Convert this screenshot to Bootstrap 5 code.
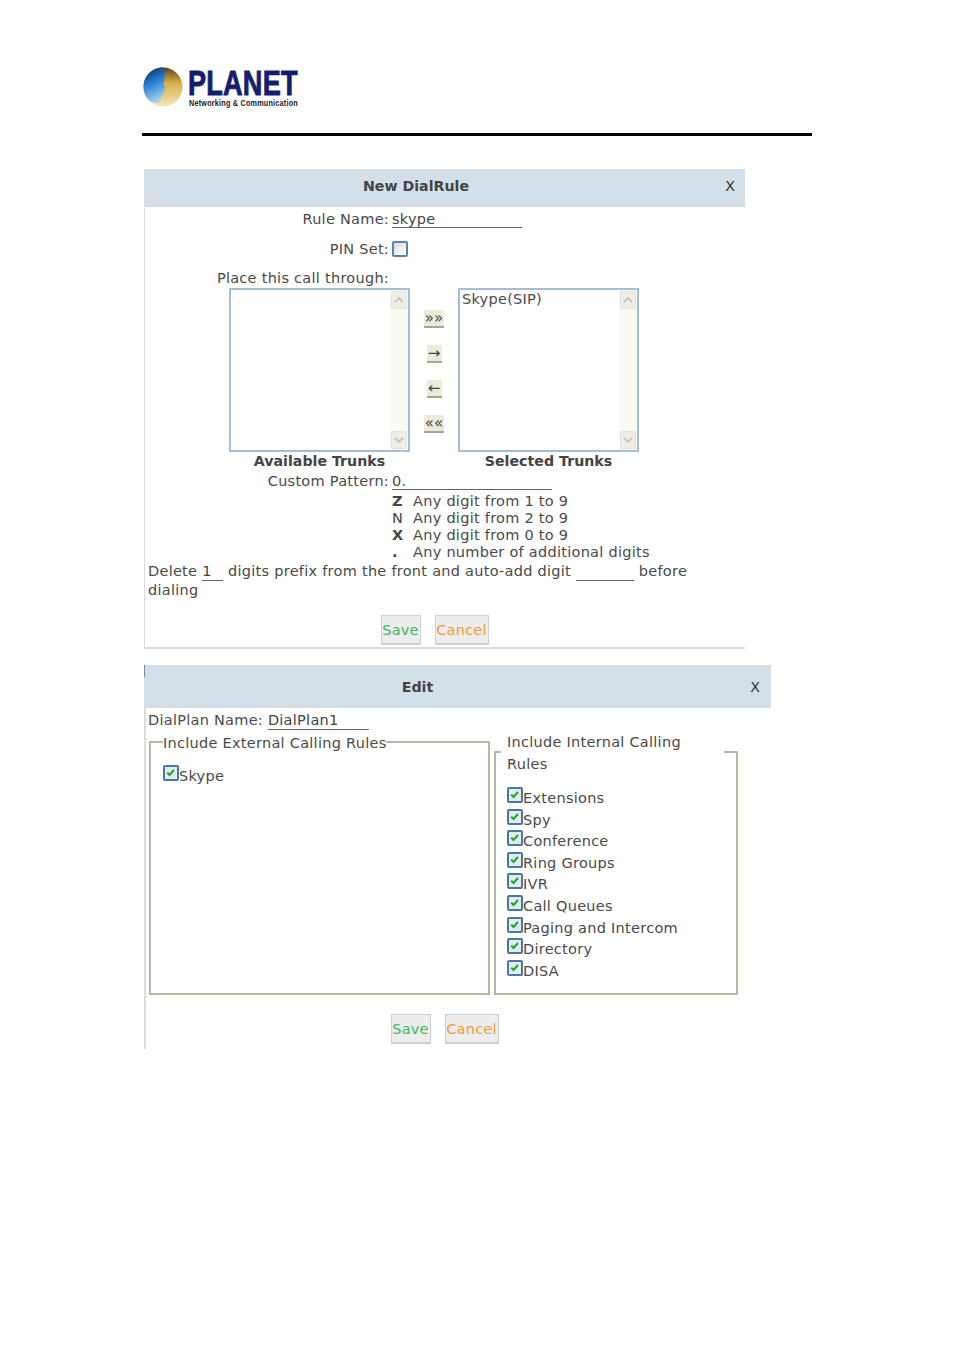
<!DOCTYPE html>
<html lang="en">
<head>
<meta charset="utf-8">
<title>DialRule</title>
<link href="https://cdn.jsdelivr.net/npm/bootstrap@5.3.0/dist/css/bootstrap.min.css" rel="stylesheet">
<style>
html,body{background:#fff}
body{font-family:"DejaVu Sans",sans-serif;font-size:14.5px;letter-spacing:.27px;color:#4a4a4a;line-height:18px;width:954px;height:1350px;overflow:hidden}
.sheet{padding:62px 142px 0 142px}
.brand{height:47px;display:block}
.rule-line{height:3px;background:#000;margin-top:24px;width:670px}
.dlg-a{width:601px;margin:33px 0 0 2px;border-left:1px solid #dcdcdc;border-bottom:2px solid #dcdcdc;height:480px}
.dlg-b{width:627px;margin:16px 0 0 2px;border-left:2px solid #dcdcdc;height:384px;position:relative}
.dlg-b::before{content:"";position:absolute;left:-2px;top:0;width:1px;height:12px;background:#6d8db0}
.head{background:#d3dfe9;border-bottom:1px solid #d8d8d8;color:#444;font-weight:700;font-size:14.2px;letter-spacing:0;position:relative;text-align:center}
.dlg-a .head{height:38px;line-height:34px;padding-right:58px}
.dlg-b .head{height:43px;line-height:44px;padding-right:82px}
.closer{position:absolute;top:0;font-weight:400;color:#333}
.dlg-a .closer{right:10px}.dlg-b .closer{right:11px}
.lbl{width:247px;text-align:right;padding-right:3px;flex:none}
.fld{height:18px;border:0;border-bottom:1px solid #666;padding:0;background:transparent;color:#444;font:inherit;letter-spacing:inherit;outline:0;border-radius:0;display:inline-block}
.line-1{height:23px;padding-top:3px}
.line-2{height:30px;padding-top:8px;align-items:center}
.pin{width:16px;height:16px;margin:0;appearance:none;border:2px solid #5b84ad;background:linear-gradient(135deg,#dcdcd6,#fff);border-radius:2px;display:block}
.line-3{height:28px;padding-top:9px}
.listrow{height:164px;padding-left:84px}
.lbox{width:181px;height:164px;border:2px solid #a5bdd6;background:#fff;position:relative;padding:1px 2px 0;line-height:16px;flex:none}
.sbar{position:absolute;right:0;top:0;bottom:0;width:18px;background:#fafaf4;display:flex;flex-direction:column;justify-content:space-between;padding:1px}
.sbtn{width:16px;height:18px;background:#eeeee6;border:1px solid #e4e4dc;border-radius:2px;display:flex;align-items:center;justify-content:center}
.movers{width:48px;flex:none;padding-top:22px;gap:17px}
.mov{height:18px;background:#ecead9;border:0;border-bottom:2px solid #a4a498;padding:0;font:15px/15px "DejaVu Sans",sans-serif;letter-spacing:0;color:#444;display:block;margin:0 auto;text-align:center;white-space:nowrap;overflow:hidden}
.mov-w{width:20px}.mov-n{width:15px}
.caps{height:18px;font-weight:700;font-size:14.2px;letter-spacing:0;color:#444;padding-left:84px}
.caps span{width:181px;text-align:center;display:block;flex:none}
.caps .gap{width:48px}
.line-c{height:22px;padding-top:2px}
.legend-row{margin-left:247px;height:17px;line-height:17px}
.first-key{margin-top:1px}
.legend-row b{width:21px;font-weight:700;flex:none;color:#444}
.legend-row b.thin{font-weight:400}
.para{padding:1px 40px 0 3px;height:44px}
.savebar{gap:14px;margin-top:10px;justify-content:center}
.dlg-a .savebar{padding-right:21px}
.act{height:30px;background:#ededed;border:1px solid #d0d0d0;border-bottom-width:2px;padding:0;font:14.5px/26px "DejaVu Sans",sans-serif;letter-spacing:.25px;border-radius:0;white-space:nowrap}
.act-s{color:#3cb85a;width:40px}.act-c{color:#f59a38;width:54px}
.dp{height:24px;padding:3px 0 0 2px}
.dp .fld{width:101px;margin-left:0}
.sets{padding-left:3px;gap:4px;height:263px;align-items:flex-start}
fieldset.box{border:2px solid #b8b7a6;margin:0;position:relative}
fieldset.box legend{float:none;width:auto;font-size:inherit;line-height:18px;margin:0;color:#4a4a4a}
.box-l{width:341px;height:263px;padding:0 12px}
fieldset.box-l legend{padding:2px 0 0}
fieldset.box.box-r{width:244px;height:267px;padding:0 11px;margin-top:-4px}
fieldset.box.box-r legend{padding:4px 30px 0 6px;line-height:21.5px;margin-left:-6px;width:223px}
.box-l .opts{margin-top:14px}.box-r .opts{margin-top:13px}
.opt{height:21.6px;display:flex;margin:0;line-height:21px}
.tick{appearance:none;width:16px;height:16px;margin:-1px 0 0;flex:none;border:2px solid #4a78a6;border-radius:2px;background:#e4ecea url("data:image/svg+xml,%3Csvg xmlns='http://www.w3.org/2000/svg' viewBox='0 0 16 16'%3E%3Cpath d='M3 7.500l3 3 6-6.500' fill='none' stroke='%2318a832' stroke-width='2.800'/%3E%3C/svg%3E") center/100% no-repeat;display:block}
.dlg-b .savebar{margin-top:19px;padding-right:28px}
</style>
</head>
<body>
<div class="sheet">
  <svg class="brand" width="170" height="47" viewBox="0 -4 170 47" role="img" aria-label="PLANET">
    <defs>
      <linearGradient id="blu" x1="0.2" y1="0" x2="0.5" y2="1"><stop offset="0" stop-color="#0e2a58"/><stop offset=".45" stop-color="#2a7ed2"/><stop offset="1" stop-color="#a8d6ee"/></linearGradient>
      <linearGradient id="gld" x1="0" y1="0" x2="0" y2="1"><stop offset="0" stop-color="#5a4210"/><stop offset=".4" stop-color="#d8b04a"/><stop offset="1" stop-color="#f4e6b8"/></linearGradient>
    </defs>
    <circle cx="21" cy="21" r="19.500" fill="url(#gld)"/>
    <path d="M21 1.600C9.500 1.500 1.500 10.500 1.500 21c0 6 3 12 8 15 4 2 9 1 10-3 0-1-.5-2 .5-3 1.500-1 1-2.500.5-3.500 2 0 2-1.500 1-3 2 0 3-1.500 1.500-3-1.500-2-1.500-3-1-5.500C23 9.500 24 5 21 1.600z" fill="url(#blu)"/>
    <text transform="translate(46 29) scale(.775 1)" font-family="'Liberation Sans',sans-serif" font-weight="700" font-size="35" fill="#141e6e" stroke="#141e6e" stroke-width=".9">PLANET</text>
    <text transform="translate(47 39.500) scale(.805 1)" font-family="'Liberation Sans',sans-serif" font-weight="700" font-size="9" fill="#222">Networking &amp; Communication</text>
  </svg>
  <div class="rule-line"></div>

  <section class="dlg-a">
    <div class="head">New DialRule<span class="closer">X</span></div>
    <div class="d-flex line-1"><span class="lbl">Rule Name:</span><input class="fld" style="width:130px" value="skype"></div>
    <div class="d-flex line-2"><span class="lbl">PIN Set:</span><input type="checkbox" class="pin"></div>
    <div class="d-flex line-3"><span class="lbl">Place this call through:</span></div>
    <div class="d-flex listrow">
      <div class="lbox"><div class="sbar"><span class="sbtn"><svg width="10" height="6" viewBox="0 0 10 6"><path d="M1 5l4-4 4 4" fill="none" stroke="#c8c8c0" stroke-width="2"/></svg></span><span class="sbtn"><svg width="10" height="6" viewBox="0 0 10 6"><path d="M1 1l4 4 4-4" fill="none" stroke="#c8c8c0" stroke-width="2"/></svg></span></div></div>
      <div class="movers d-flex flex-column">
        <button class="mov mov-w">»»</button><button class="mov mov-n">→</button><button class="mov mov-n">←</button><button class="mov mov-w">««</button>
      </div>
      <div class="lbox">Skype(SIP)<div class="sbar"><span class="sbtn"><svg width="10" height="6" viewBox="0 0 10 6"><path d="M1 5l4-4 4 4" fill="none" stroke="#c8c8c0" stroke-width="2"/></svg></span><span class="sbtn"><svg width="10" height="6" viewBox="0 0 10 6"><path d="M1 1l4 4 4-4" fill="none" stroke="#c8c8c0" stroke-width="2"/></svg></span></div></div>
    </div>
    <div class="d-flex caps"><span>Available Trunks</span><span class="gap"></span><span>Selected Trunks</span></div>
    <div class="d-flex line-c"><span class="lbl">Custom Pattern:</span><input class="fld" style="width:160px" value="0."></div>
    <div class="d-flex legend-row first-key"><b>Z</b><span>Any digit from 1 to 9</span></div>
    <div class="d-flex legend-row"><b class="thin">N</b><span>Any digit from 2 to 9</span></div>
    <div class="d-flex legend-row"><b>X</b><span>Any digit from 0 to 9</span></div>
    <div class="d-flex legend-row"><b>.</b><span>Any number of additional digits</span></div>
    <div class="para">Delete <input class="fld" style="width:21px" value="1"> digits prefix from the front and auto-add digit <input class="fld" style="width:58px"> before dialing</div>
    <div class="d-flex savebar"><button class="act act-s">Save</button><button class="act act-c">Cancel</button></div>
  </section>

  <section class="dlg-b">
    <div class="head">Edit<span class="closer">X</span></div>
    <div class="dp">DialPlan Name: <input class="fld" value="DialPlan1"></div>
    <div class="d-flex sets">
      <fieldset class="box box-l">
        <legend>Include External Calling Rules</legend>
        <div class="opts"><label class="opt"><input type="checkbox" class="tick" checked>Skype</label></div>
      </fieldset>
      <fieldset class="box box-r">
        <legend>Include Internal Calling Rules</legend>
        <div class="opts">
          <label class="opt"><input type="checkbox" class="tick" checked>Extensions</label>
          <label class="opt"><input type="checkbox" class="tick" checked>Spy</label>
          <label class="opt"><input type="checkbox" class="tick" checked>Conference</label>
          <label class="opt"><input type="checkbox" class="tick" checked>Ring Groups</label>
          <label class="opt"><input type="checkbox" class="tick" checked>IVR</label>
          <label class="opt"><input type="checkbox" class="tick" checked>Call Queues</label>
          <label class="opt"><input type="checkbox" class="tick" checked>Paging and Intercom</label>
          <label class="opt"><input type="checkbox" class="tick" checked>Directory</label>
          <label class="opt"><input type="checkbox" class="tick" checked>DISA</label>
        </div>
      </fieldset>
    </div>
    <div class="d-flex savebar"><button class="act act-s">Save</button><button class="act act-c">Cancel</button></div>
  </section>
</div>
</body>
</html>
